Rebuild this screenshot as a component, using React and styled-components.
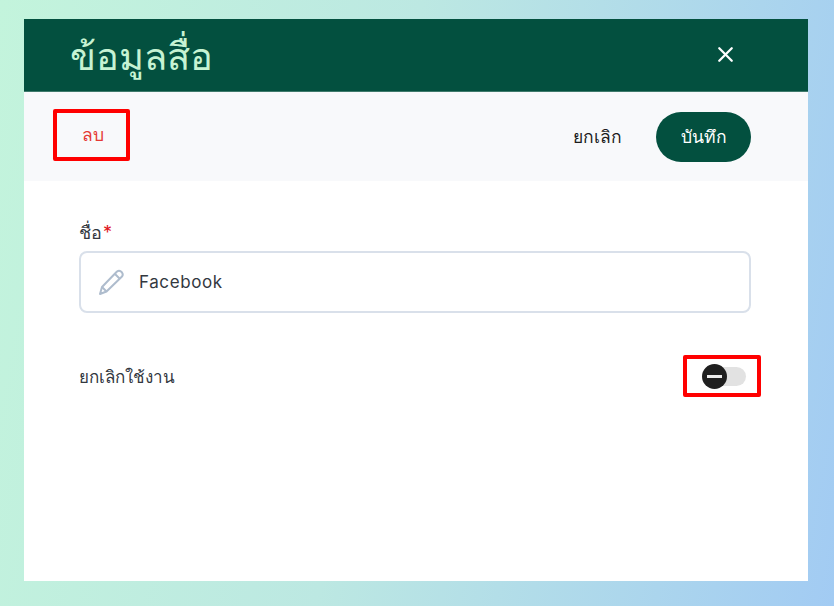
import { X } from 'lucide-react'
import styled, { createGlobalStyle } from 'styled-components'

const GlobalStyle = createGlobalStyle`
    * { box-sizing: border-box; }
    html, body { margin: 0; padding: 0; }
    body { font-family: "Inter", "Noto Sans", "DejaVu Sans", sans-serif; }
`;

const Page = styled.div`
    width: 834px;
    height: 606px;
    padding: 19px 26px 25px 24px;
    background: linear-gradient(100deg, #c3f4dc 0%, #bce8e2 45%, #a2cbf3 100%);
    overflow: hidden;
`;

const Modal = styled.div`
    height: 100%;
    background: #fff;
    display: flex;
    flex-direction: column;
`;

const Header = styled.header`
    height: 73px;
    flex: none;
    background: #03503f;
    border-bottom: 1px solid #3f7a6c;
    display: flex;
    align-items: center;
    justify-content: space-between;
    padding: 0 70px 2px 46px;
`;

const Title = styled.h1`
    margin: 0;
    color: #c6f3d3;
    font-size: 38px;
    font-weight: 400;
    line-height: 44px;
    padding-top: 4px;
`;

const CloseButton = styled.button`
    border: none;
    background: none;
    padding: 0;
    color: #fff;
    display: flex;
`;

const Toolbar = styled.div`
    height: 89px;
    flex: none;
    background: #f8f9fb;
    display: flex;
    align-items: center;
    justify-content: space-between;
    padding: 0 57px 3px 29px;
`;

const Highlight = styled.div`
    border: 4px solid #ff0000;
    border-radius: 2px;
    display: flex;
    align-items: center;
    justify-content: center;
    width: ${props => props.$width}px;
    height: ${props => props.$height}px;
    margin-right: ${props => props.$pull || 0}px;
`;

const DeleteButton = styled.button`
    border: none;
    background: none;
    padding: 0 0 0 2px;
    font: inherit;
    font-size: 17.5px;
    color: #e53935;
`;

const Actions = styled.div`
    display: flex;
    align-items: center;
    gap: 34px;
    padding-top: 3px;
`;

const CancelButton = styled.button`
    border: none;
    background: none;
    padding: 0;
    font: inherit;
    font-size: 17.5px;
    color: #1c1c1c;
`;

const SaveButton = styled.button`
    width: 95px;
    height: 50px;
    border: none;
    border-radius: 25px;
    background: #03503f;
    color: #fff;
    font: inherit;
    font-size: 17.5px;
`;

const Body = styled.div`
    padding: 40px 57px 0 55px;
    display: flex;
    flex-direction: column;
`;

const Label = styled.label`
    font-size: 18px;
    line-height: 24px;
    color: #33383f;
    margin-bottom: 6px;
`;

const Required = styled.span`
    color: #e0141c;
    margin-left: 1px;
`;

const InputBox = styled.div`
    height: 62px;
    border: 2px solid #d9e0ea;
    border-radius: 8px;
    background: #fff;
    display: flex;
    align-items: center;
    gap: 14px;
    padding: 0 0 0 16px;
`;

const InputText = styled.span`
    font-size: 17px;
    letter-spacing: 0.6px;
    color: #33383f;
`;

const SwitchRow = styled.div`
    margin-top: 42px;
    display: flex;
    align-items: center;
    justify-content: space-between;
`;

const SwitchLabel = styled.span`
    font-size: 17px;
    color: #33383f;
`;

const Track = styled.div`
    position: relative;
    width: 42px;
    height: 19px;
    margin-left: 6px;
    border-radius: 10px;
    background: #e2e2e2;
`;

const Knob = styled.div`
    position: absolute;
    left: -2px;
    top: -3px;
    width: 25px;
    height: 25px;
    border-radius: 50%;
    background: #1f1f1f;
    display: flex;
    align-items: center;
    justify-content: center;
    &::after {
        content: "";
        width: 15px;
        height: 3px;
        background: #ededed;
    }
`;

export default function App() {
    return (
        <>
            <GlobalStyle />
            <Page>
                <Modal>
                    <Header>
                        <Title>ข้อมูลสื่อ</Title>
                        <CloseButton><X size={25} strokeWidth={2.2} /></CloseButton>
                    </Header>
                    <Toolbar>
                        <Highlight $width={77} $height={52}>
                            <DeleteButton>ลบ</DeleteButton>
                        </Highlight>
                        <Actions>
                            <CancelButton>ยกเลิก</CancelButton>
                            <SaveButton>บันทึก</SaveButton>
                        </Actions>
                    </Toolbar>
                    <Body>
                        <Label>ชื่อ<Required>*</Required></Label>
                        <InputBox>
                            <svg width="28" height="28" viewBox="0 0 28 28" fill="none" stroke="#aebccd" strokeWidth="2" strokeLinejoin="round">
                                <path d="M3 26 L5 19 L20 3.5 Q22 2 24 3.5 L25 4.5 Q26.5 6.5 25 8.5 L9.5 23.5 Z" />
                                <path d="M18 6 L23 11" />
                                <path d="M5 19 L9.5 23.5" />
                            </svg>
                            <InputText>Facebook</InputText>
                        </InputBox>
                        <SwitchRow>
                            <SwitchLabel>ยกเลิกใช้งาน</SwitchLabel>
                            <Highlight $width={78} $height={42} $pull={-10}>
                                <Track><Knob /></Track>
                            </Highlight>
                        </SwitchRow>
                    </Body>
                </Modal>
            </Page>
        </>
    );
}
